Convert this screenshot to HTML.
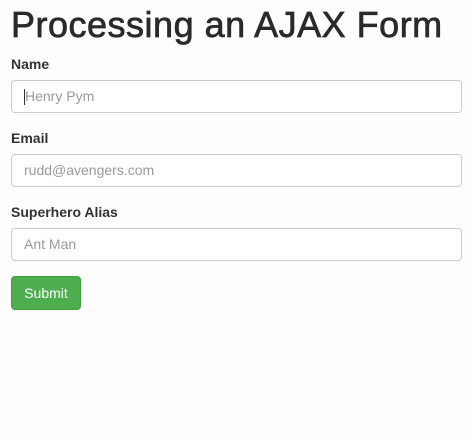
<!DOCTYPE html>
<html><head><style>
body{margin:0;background:#fdfdfd;font-family:"Liberation Sans",sans-serif;color:#333;width:474px;height:439px;overflow:hidden;position:relative}
h1{position:absolute;left:11px;top:3px;margin:0;font-size:36px;font-weight:normal;line-height:44px;color:#2a2a2a;-webkit-text-stroke:0.7px #2a2a2a;letter-spacing:0.5px}
label{position:absolute;left:11px;font-size:14px;font-weight:bold;color:#333}
.in{position:absolute;left:11px;width:451px;height:33px;border:1px solid #ccc;border-radius:4px;background:#fff;box-sizing:border-box;font-size:14px;color:#999;padding-left:12px;line-height:31px}
.btn{position:absolute;left:11px;top:276px;width:70px;height:34px;background:#4cae4c;border-radius:4px;color:#fff;font-size:14px;text-align:center;line-height:33px;border:1px solid #449d44;box-sizing:border-box}
.cur{display:inline-block;width:1px;height:16px;background:#333;vertical-align:middle;margin-right:0}
</style></head><body>
<h1>Processing an AJAX Form</h1>
<label style="top:56px">Name</label>
<div class="in" style="top:80px"><span class="cur"></span>Henry Pym</div>
<label style="top:130px">Email</label>
<div class="in" style="top:154px">rudd@avengers.com</div>
<label style="top:204px">Superhero Alias</label>
<div class="in" style="top:228px">Ant Man</div>
<div class="btn">Submit</div>
</body></html>
